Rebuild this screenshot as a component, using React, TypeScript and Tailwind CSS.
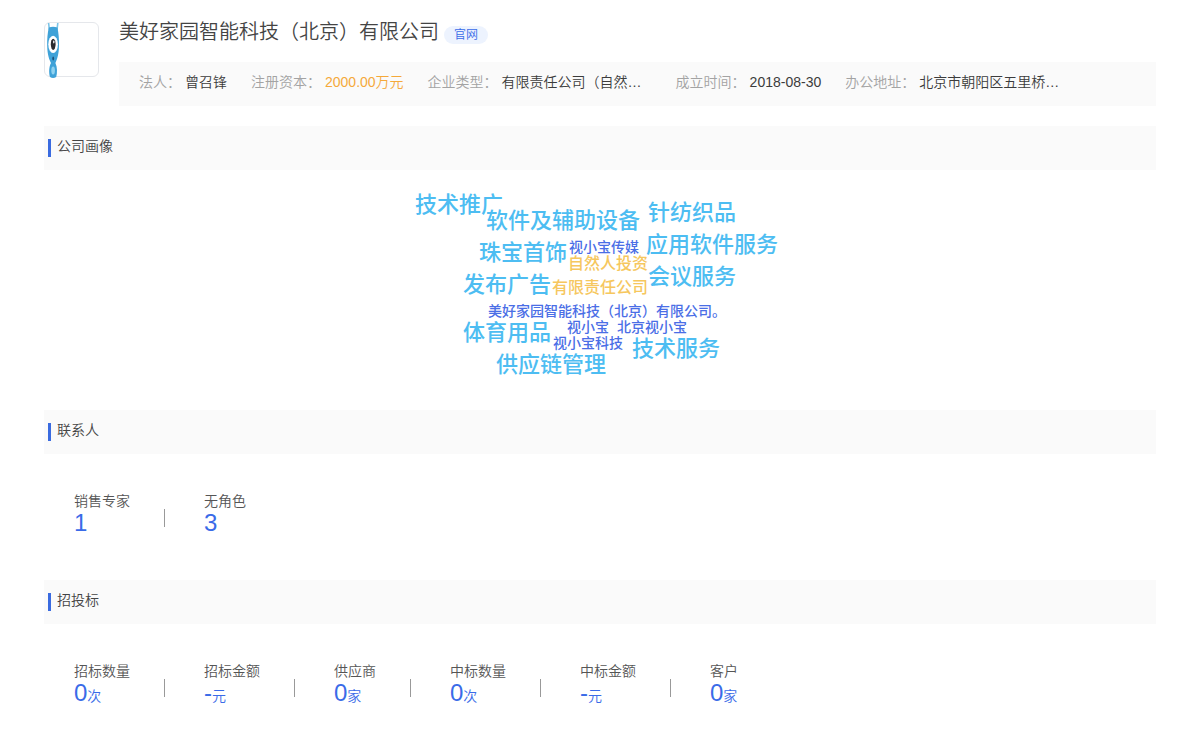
import type { ReactNode } from 'react'

const companyInfo = [
  { label: '法人：', value: '曾召锋' },
  { label: '注册资本：', value: '2000.00万元', highlight: true },
  { label: '企业类型：', value: '有限责任公司（自然…', wide: true },
  { label: '成立时间：', value: '2018-08-30' },
  { label: '办公地址：', value: '北京市朝阳区五里桥…', wide: true },
]

const tagStyles = {
  business: 'text-[22px] text-[#4dbdf2]',
  type: 'text-base text-[#f6c75e]',
  brand: 'text-sm text-[#4a6ee6]',
}

// x is the left edge and y the middle of each word inside the cloud
const tags: { text: string; kind: keyof typeof tagStyles; x: number; y: number }[] = [
  { text: '技术推广', kind: 'business', x: 15, y: 35 },
  { text: '软件及辅助设备', kind: 'business', x: 86, y: 51 },
  { text: '针纺织品', kind: 'business', x: 248, y: 43 },
  { text: '珠宝首饰', kind: 'business', x: 79, y: 83 },
  { text: '视小宝传媒', kind: 'brand', x: 169, y: 77 },
  { text: '应用软件服务', kind: 'business', x: 246, y: 75 },
  { text: '自然人投资', kind: 'type', x: 168, y: 94 },
  { text: '会议服务', kind: 'business', x: 248, y: 107 },
  { text: '发布广告', kind: 'business', x: 63, y: 115 },
  { text: '有限责任公司', kind: 'type', x: 152, y: 118 },
  { text: '美好家园智能科技（北京）有限公司。', kind: 'brand', x: 88, y: 141 },
  { text: '体育用品', kind: 'business', x: 63, y: 163 },
  { text: '视小宝', kind: 'brand', x: 167, y: 157 },
  { text: '北京视小宝', kind: 'brand', x: 217, y: 157 },
  { text: '视小宝科技', kind: 'brand', x: 153, y: 173 },
  { text: '技术服务', kind: 'business', x: 232, y: 179 },
  { text: '供应链管理', kind: 'business', x: 96, y: 195 },
]

const contacts = [
  { label: '销售专家', value: '1' },
  { label: '无角色', value: '3' },
]

const bids = [
  { label: '招标数量', value: '0', unit: '次' },
  { label: '招标金额', value: '-', unit: '元' },
  { label: '供应商', value: '0', unit: '家' },
  { label: '中标数量', value: '0', unit: '次' },
  { label: '中标金额', value: '-', unit: '元' },
  { label: '客户', value: '0', unit: '家' },
]

function Logo() {
  return (
    <div className="h-[55px] w-[55px] shrink-0 rounded-md border border-gray-200">
      <svg width="16" height="56" viewBox="0 0 16 56" className="block" role="img" aria-label="logo">
        <path d="M3.6 0 L4.4 7 M12.8 0 L12 7" stroke="#7cc4e6" strokeWidth="1.6" fill="none" />
        <path d="M3.8 4.5 Q8 3 12.4 4.5 C13.6 10 14.2 16 14 23 C13.8 32 11.8 37 10.4 40 C12.4 44 12.4 50 11.2 54 Q8 56 5 54 C3.8 50 3.8 44 6 40 C4.4 37 2.4 32 2.2 23 C2 16 2.6 10 3.8 4.5 Z" fill="#3fa2d8" />
        <ellipse cx="8.1" cy="21.3" rx="4.8" ry="8.6" fill="#fff" />
        <ellipse cx="8.2" cy="21.3" rx="2.4" ry="5.6" fill="#2b2b2f" />
        <ellipse cx="8.8" cy="19" rx="0.7" ry="1.4" fill="#fff" />
        <ellipse cx="8.2" cy="35.5" rx="0.9" ry="2" fill="#1d4f78" />
        <ellipse cx="8.1" cy="47.5" rx="1.8" ry="4" fill="#8fd2f0" />
      </svg>
    </div>
  )
}

function Section({ title, children }: { title: string; children: ReactNode }) {
  return (
    <section>
      <h2 className="flex h-11 items-center gap-1.5 bg-[#fafafa] pl-1 text-sm text-[#444]">
        <span className="h-[18px] w-[3px] bg-[#3a6be0]" />
        <span className="pb-1">{title}</span>
      </h2>
      {children}
    </section>
  )
}

function Stats({ items }: { items: { label: string; value: string; unit?: string }[] }) {
  return (
    <dl className="flex flex-wrap px-[30px] pt-[37px]">
      {items.map((item, i) => (
        <div key={item.label} className="flex items-end">
          {i > 0 && <span className="mr-[39px] mb-2 ml-[34px] h-[18px] w-px bg-[#999]" />}
          <div>
            <dt className="text-sm leading-5 text-[#555]">{item.label}</dt>
            <dd className="text-2xl leading-6 text-[#3a6be8]">
              {item.value}
              {item.unit && <span className="text-sm leading-none">{item.unit}</span>}
            </dd>
          </div>
        </div>
      ))}
    </dl>
  )
}

export default function App() {
  return (
    <main className="min-h-screen bg-white px-11 pt-[22px] pb-10 font-['Liberation_Sans','Noto_Sans_CJK_SC',sans-serif] font-[350]">
      {/* Company header */}
      <header className="flex gap-5">
        <Logo />
        <div className="min-w-0 flex-1">
          <div className="flex h-10 items-start gap-[5px]">
            <h1 className="text-xl leading-5 text-[#444]">美好家园智能科技（北京）有限公司</h1>
            <a href="#" className="mt-1 rounded-full bg-[#edf3fe] px-2.5 text-xs leading-[18px] text-[#3a6be8]">
              官网
            </a>
          </div>
          <dl className="flex min-h-[44px] flex-wrap items-center gap-x-6 bg-[#fafafa] px-5 pb-1 text-sm">
            {companyInfo.map((item) => (
              <div key={item.label} className="flex gap-1">
                <dt className="text-[#a3a3a3]">{item.label}</dt>
                <dd className={`${item.highlight ? 'text-[#f5a93a]' : 'text-[#3c3c3c]'} ${item.wide ? 'w-[150px]' : ''}`}>
                  {item.value}
                </dd>
              </div>
            ))}
          </dl>
        </div>
      </header>

      <div className="mt-5 flex flex-col">
        <Section title="公司画像">
          {/* Word cloud */}
          <div className="relative mx-auto h-60 w-[400px] font-medium">
            {tags.map((tag) => (
              <span
                key={tag.text}
                className={`absolute -translate-y-1/2 leading-none whitespace-nowrap ${tagStyles[tag.kind]}`}
                style={{ left: tag.x, top: tag.y }}
              >
                {tag.text}
              </span>
            ))}
          </div>
        </Section>

        <Section title="联系人">
          <div className="min-h-[126px]">
            <Stats items={contacts} />
          </div>
        </Section>

        <Section title="招投标">
          <Stats items={bids} />
        </Section>
      </div>
    </main>
  )
}
